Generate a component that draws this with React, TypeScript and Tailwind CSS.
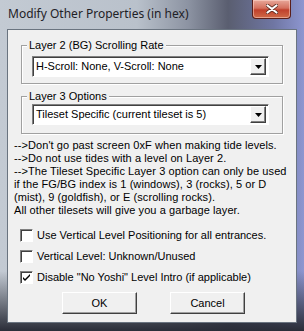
import React from 'react';

const bodyFont = { fontFamily: 'Tahoma, "Liberation Sans", Arial, sans-serif' };

const Combo: React.FC<{ value: string }> = ({ value }) => (
  <div className="flex h-[21px] items-center border border-t-[#808080] border-l-[#808080] border-b-white border-r-white bg-white shadow-[inset_1px_1px_0_#404040]">
    <span className="flex-1 truncate pl-[3px] text-[11px] text-black">{value}</span>
    <div className="mr-[2px] flex h-[17px] w-[16px] items-center justify-center border border-t-white border-l-white border-r-[#404040] border-b-[#404040] bg-[#f0f0f0] shadow-[inset_-1px_-1px_0_#808080]">
      <svg width="7" height="4" viewBox="0 0 7 4">
        <path d="M0 0h7L3.5 4z" fill="#000" />
      </svg>
    </div>
  </div>
);

const Group: React.FC<{ label: string; children: React.ReactNode; className?: string }> = ({ label, children, className }) => (
  <div className={`relative ml-[13px] w-[262px] border border-[#a0a0a0] shadow-[inset_1px_1px_0_white,1px_1px_0_white] ${className ?? ''}`}>
    <span className="absolute left-[5px] top-[-8px] bg-[#f0f0f0] px-[2px] text-[11px] leading-[14px] text-black">{label}</span>
    {children}
  </div>
);

const Check: React.FC<{ label: string; checked?: boolean }> = ({ label, checked }) => (
  <div className="flex h-[21px] items-center pl-[12px]">
    <div className="flex h-[13px] w-[13px] items-center justify-center border border-t-[#808080] border-l-[#808080] border-b-white border-r-white bg-white shadow-[inset_1px_1px_0_#404040]">
      {checked && (
        <svg width="9" height="9" viewBox="0 0 9 9">
          <path d="M1 4l2 2l5-5v2l-5 5l-2-2z" fill="#000" />
        </svg>
      )}
    </div>
    <span className="ml-[4px] text-[11px] text-black">{label}</span>
  </div>
);

const Btn: React.FC<{ label: string }> = ({ label }) => (
  <button className="flex h-[22px] w-[75px] items-center justify-center border border-t-white border-l-white border-r-[#404040] border-b-[#404040] bg-[#f0f0f0] text-[11px] text-black shadow-[inset_-1px_-1px_0_#a0a0a0]">
    {label}
  </button>
);

export default function App() {
  return (
    <div
      className="relative h-[331px] w-[304px] overflow-hidden bg-[linear-gradient(90deg,#c3cad3_0%,#b9c1cb_45%,#8c93a2_62%,#5a5e70_75%,#6f76a3_90%,#8d96d0_100%)]"
      style={bodyFont}
    >
      <div className="absolute inset-x-0 bottom-0 h-[60px] bg-gradient-to-b from-transparent to-[#2a2d38]" />
      <div className="relative flex h-[29px] items-start">
        <span className="ml-[8px] mt-[5px] text-[12px] text-[#1e2126]" style={{ fontFamily: '"Segoe UI", "Noto Sans", sans-serif' }}>
          Modify Other Properties (in hex)
        </span>
        <div className="absolute left-[252px] top-0 flex h-[19px] w-[39px] items-center justify-center rounded-b-[4px] border border-t-0 border-[#5a1e1a] bg-[linear-gradient(180deg,#e8a89a_0%,#d4705e_45%,#c0402c_55%,#cf6a48_100%)] shadow-[inset_0_0_0_1px_rgba(255,220,210,0.5)]">
          <svg width="12" height="10" viewBox="0 0 12 10">
            <path d="M1 1l10 8M11 1L1 9" stroke="#5a2a20" strokeWidth="3.6" strokeLinecap="round" />
            <path d="M1.5 1.5l9 7M10.5 1.5l-9 7" stroke="#fff" strokeWidth="2.2" strokeLinecap="round" />
          </svg>
        </div>
      </div>
      <div className="relative ml-[7px] flex h-[294px] w-[290px] flex-col border border-[#6a7480] bg-[#f0f0f0] pt-[15px]">
        <Group label="Layer 2 (BG) Scrolling Rate" className="h-[39px] pt-[10px]">
          <div className="ml-[10px] w-[237px]">
            <Combo value="H-Scroll: None, V-Scroll: None" />
          </div>
        </Group>
        <Group label="Layer 3 Options" className="mt-[12px] h-[38px] pt-[7px]">
          <div className="ml-[10px] w-[237px]">
            <Combo value="Tileset Specific (current tileset is 5)" />
          </div>
        </Group>
        <div className="ml-[6px] mt-[5px] text-[11px] leading-[13px] tracking-[0.08px] text-black">
          <div>--&gt;Don't go past screen 0xF when making tide levels.</div>
          <div>--&gt;Do not use tides with a level on Layer 2.</div>
          <div>--&gt;The Tileset Specific Layer 3 option can only be used</div>
          <div>if the FG/BG index is 1 (windows), 3 (rocks), 5 or D</div>
          <div>(mist), 9 (goldfish), or E (scrolling rocks).</div>
          <div>All other tilesets will give you a garbage layer.</div>
        </div>
        <div className="mt-[8px] flex flex-col">
          <Check label="Use Vertical Level Positioning for all entrances." />
          <Check label="Vertical Level: Unknown/Unused" />
          <Check label={'Disable "No Yoshi" Level Intro (if applicable)'} checked />
        </div>
        <div className="mt-[4px] flex gap-[33px] pl-[54px]">
          <Btn label="OK" />
          <Btn label="Cancel" />
        </div>
      </div>
    </div>
  );
}
